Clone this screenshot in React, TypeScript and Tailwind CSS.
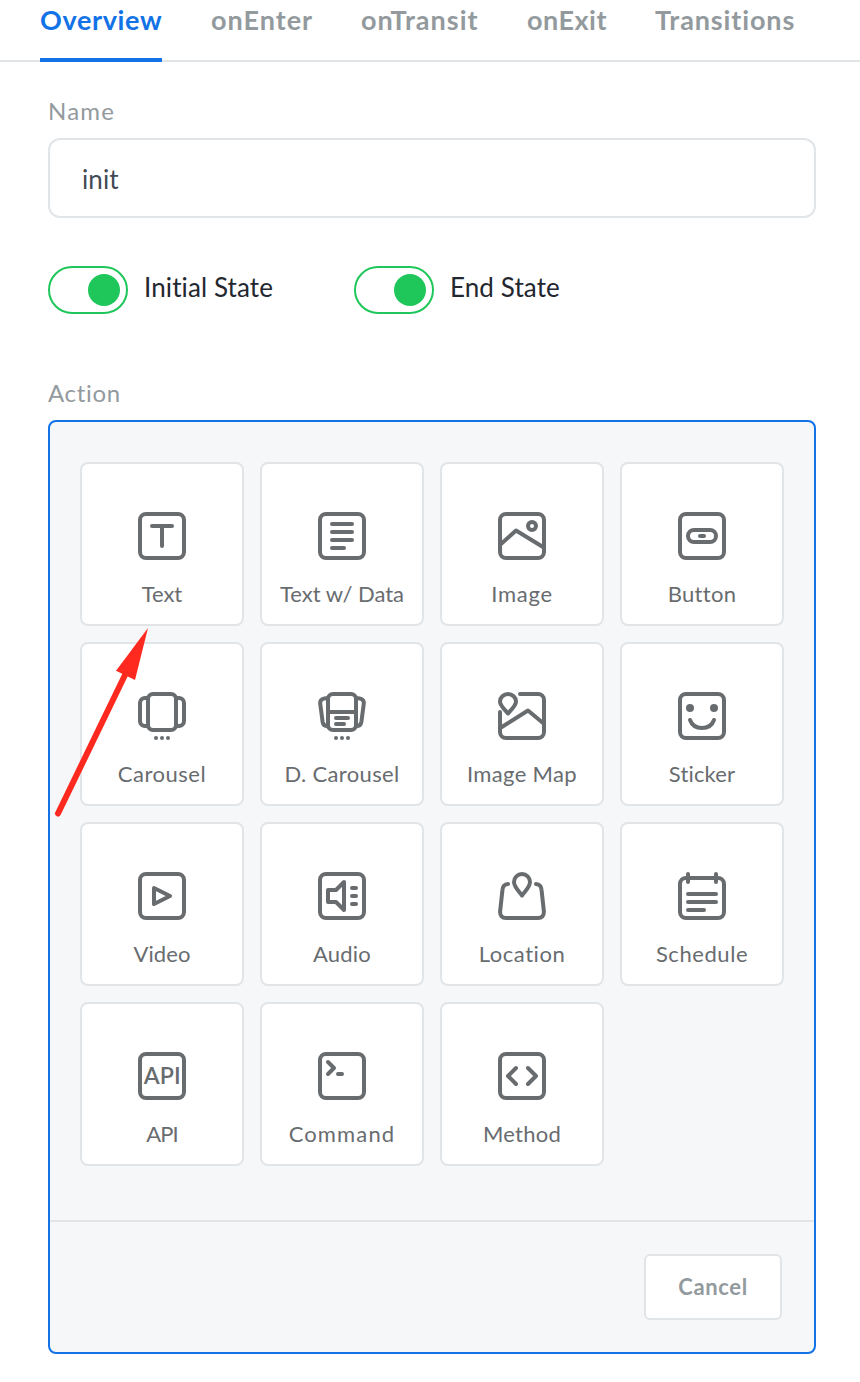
import React from "react";

const tabs = [
  { label: "Overview", box: "w-[122px] tracking-[0.65px]", active: true },
  { label: "onEnter", box: "w-[103px] pl-px tracking-[1px]" },
  { label: "onTransit", box: "w-[118px] tracking-[1px]" },
  { label: "onExit", box: "w-[80px] tracking-[0.51px]" },
  { label: "Transitions", box: "w-[140px] tracking-[0.88px]" },
];

const Frame = () => <rect x="2" y="2" width="44" height="44" rx="6" />;

const Dots = () => (
  <g fill="currentColor" stroke="none">
    <circle cx="18" cy="46" r="2" />
    <circle cx="24" cy="46" r="2" />
    <circle cx="30" cy="46" r="2" />
  </g>
);

const actions: { label: string; tracking: string; icon: React.ReactNode }[] = [
  {
    label: "Text",
    tracking: "tracking-[-0.08px]",
    icon: (
      <>
        <Frame />
        <path d="M14 14H34M24 14V34" />
      </>
    ),
  },
  {
    label: "Text w/ Data",
    tracking: "tracking-[-0.02px]",
    icon: (
      <>
        <Frame />
        <path d="M14 12H34M14 20H34M14 28H34M14 36H26" />
      </>
    ),
  },
  {
    label: "Image",
    tracking: "tracking-[0.7px]",
    icon: (
      <>
        <Frame />
        <path d="M3 32L18 18.5L45 35" />
        <circle cx="34" cy="14" r="4" />
      </>
    ),
  },
  {
    label: "Button",
    tracking: "tracking-[0.3px]",
    icon: (
      <>
        <Frame />
        <rect x="10" y="18" width="28" height="12" rx="6" />
        <path d="M22 24H26" />
      </>
    ),
  },
  {
    label: "Carousel",
    tracking: "tracking-[0.5px]",
    icon: (
      <>
        <rect x="10" y="2" width="28" height="36" rx="5" />
        <path d="M10 6H7a5 5 0 0 0-5 5v18a5 5 0 0 0 5 5h3M38 6h3a5 5 0 0 1 5 5v18a5 5 0 0 1-5 5h-3" />
        <Dots />
      </>
    ),
  },
  {
    label: "D. Carousel",
    tracking: "tracking-[0.34px]",
    icon: (
      <>
        <rect x="10" y="2" width="28" height="36" rx="5" />
        <path d="M10 6L6.3 6.5Q1.8 7.3 2.2 11.6L4.6 29.8Q5.3 34 9.5 34M38 6L41.7 6.5Q46.2 7.3 45.8 11.6L43.4 29.8Q42.7 34 38.5 34" />
        <path d="M10 20H38M18 26H30M18 32H26" />
        <Dots />
      </>
    ),
  },
  {
    label: "Image Map",
    tracking: "tracking-[0.36px]",
    icon: (
      <>
        <path d="M10 21.5C7 17.5 2 13.8 2 9.5A8 7.5 0 0 1 18 9.5C18 13.8 13 17.5 10 21.5Z" />
        <path d="M22 2H40a6 6 0 0 1 6 6V40a6 6 0 0 1-6 6H8a6 6 0 0 1-6-6V20" />
        <path d="M3 35.5L30 18.5L45 31" />
      </>
    ),
  },
  {
    label: "Sticker",
    tracking: "tracking-[0.14px]",
    icon: (
      <>
        <Frame />
        <path d="M12 28C14 33.5 18.5 36 24 36S34 33.5 36 28" />
        <g fill="currentColor" stroke="none">
          <circle cx="12" cy="16" r="4" />
          <circle cx="36" cy="16" r="4" />
        </g>
      </>
    ),
  },
  {
    label: "Video",
    tracking: "tracking-[0.1px]",
    icon: (
      <>
        <Frame />
        <path d="M16 16L32 24L16 32Z" />
      </>
    ),
  },
  {
    label: "Audio",
    tracking: "tracking-[0.25px]",
    icon: (
      <>
        <Frame />
        <path d="M10 18H18L26 10V38L18 30H10Z" />
        <path d="M34 16H38M34 24H38M34 32H38" />
      </>
    ),
  },
  {
    label: "Location",
    tracking: "tracking-[0.55px]",
    icon: (
      <>
        <path d="M24 23.5C21 19.3 16 15 16 10A8 8 0 0 1 32 10C32 15 27 19.3 24 23.5Z" />
        <path d="M10 12Q4.9 12.5 4.5 17.5L2.1 39.5Q2 46 8 46H40Q46 46 45.9 39.5L43.5 17.5Q43.1 12.5 38 12" />
      </>
    ),
  },
  {
    label: "Schedule",
    tracking: "tracking-[0.57px]",
    icon: (
      <>
        <rect x="2" y="6" width="44" height="40" rx="6" />
        <path d="M10 2V10M38 2V10M10 22H38M10 30H38M10 38H26" />
      </>
    ),
  },
  {
    label: "API",
    tracking: "tracking-[-1px]",
    icon: (
      <>
        <Frame />
        <text
          x="5.8"
          y="31.8"
          textLength="36.8"
          lengthAdjust="spacingAndGlyphs"
          className="fill-current stroke-none text-[22px] font-semibold"
        >
          API
        </text>
      </>
    ),
  },
  {
    label: "Command",
    tracking: "tracking-[1.15px]",
    icon: (
      <>
        <Frame />
        <path d="M10 10L16 16L10 22M20 22H24" />
      </>
    ),
  },
  {
    label: "Method",
    tracking: "tracking-[0.25px]",
    icon: (
      <>
        <Frame />
        <path d="M18 16L10 24L18 32M30 16L38 24L30 32" />
      </>
    ),
  },
];

function Toggle({ label, className }: { label: string; className: string }) {
  return (
    <div className={`flex items-start gap-4 ${className}`}>
      <div className="flex h-12 w-20 items-center justify-end rounded-full border-2 border-[#1fc75b] pr-1.5">
        <div className="size-8 rounded-full bg-[#1fc75b]" />
      </div>
      <span className="pt-[5px] text-[26px] leading-8 tracking-[0.1px] text-[#23272f]">{label}</span>
    </div>
  );
}

export default function App() {
  return (
    <div className="relative h-[1382px] w-[860px] overflow-hidden bg-white font-['Lato',sans-serif]">
      <nav className="flex h-[62px] gap-12 border-b-2 border-[#e1e5e8] pl-10">
        {tabs.map((t) => (
          <div
            key={t.label}
            className={`h-[62px] border-b-4 pt-1 text-[27px] leading-8 font-bold whitespace-nowrap ${t.box} ${
              t.active ? "border-[#1272e6] text-[#1272e6]" : "border-transparent text-[#939a9e]"
            }`}
          >
            {t.label}
          </div>
        ))}
      </nav>

      <main className="pr-11 pl-12">
        <div className="h-[76px] pt-[33px] text-2xl leading-8 tracking-[1.2px] text-[#939a9e]">Name</div>
        <div className="h-20 rounded-xl border-2 border-[#e1e5e8] px-8 pt-[23px] text-[26px] leading-8 tracking-[0.1px] text-[#434a54]">
          init
        </div>

        <div className="flex pt-12">
          <Toggle label="Initial State" className="w-[306px]" />
          <Toggle label="End State" className="w-[306px]" />
        </div>

        <div className="h-[106px] pt-[63px] text-2xl leading-8 tracking-[0.7px] text-[#939a9e]">Action</div>

        <section className="flex h-[934px] flex-col rounded-lg border-2 border-[#1272e6] bg-[#f5f7f9]">
          <div className="grid flex-1 grid-cols-[repeat(4,164px)] content-start gap-4 px-[30px] pt-10">
            {actions.map((a) => (
              <button
                key={a.label}
                className="flex h-[164px] flex-col items-center rounded-lg border-2 border-[#e1e5e8] bg-white pt-12 text-[#686c6f]"
              >
                <svg
                  viewBox="0 0 48 48"
                  className="size-12 shrink-0 overflow-visible fill-none stroke-current stroke-4"
                  strokeLinecap="round"
                  strokeLinejoin="round"
                >
                  {a.icon}
                </svg>
                <span className={`mt-5 text-[22px] leading-7 whitespace-nowrap ${a.tracking}`}>{a.label}</span>
              </button>
            ))}
          </div>
          <footer className="flex h-[132px] items-start justify-end border-t-2 border-[#e1e5e8] pt-8 pr-8">
            <button className="h-[66px] w-[138px] rounded-md border-2 border-[#e1e5e8] bg-white pb-0.5 text-[22px] font-bold tracking-[0.64px] text-[#939a9e]">
              Cancel
            </button>
          </footer>
        </section>
      </main>

      <svg
        viewBox="0 0 100 196"
        className="pointer-events-none absolute top-[624px] left-[52px] h-[196px] w-[100px] text-[#ff2a1f]"
      >
        <path d="M6 189.5L73.5 50" className="fill-none stroke-current stroke-6" strokeLinecap="round" />
        <path d="M96 4L64 46.8L83 56Z" className="fill-current" />
      </svg>
    </div>
  );
}
